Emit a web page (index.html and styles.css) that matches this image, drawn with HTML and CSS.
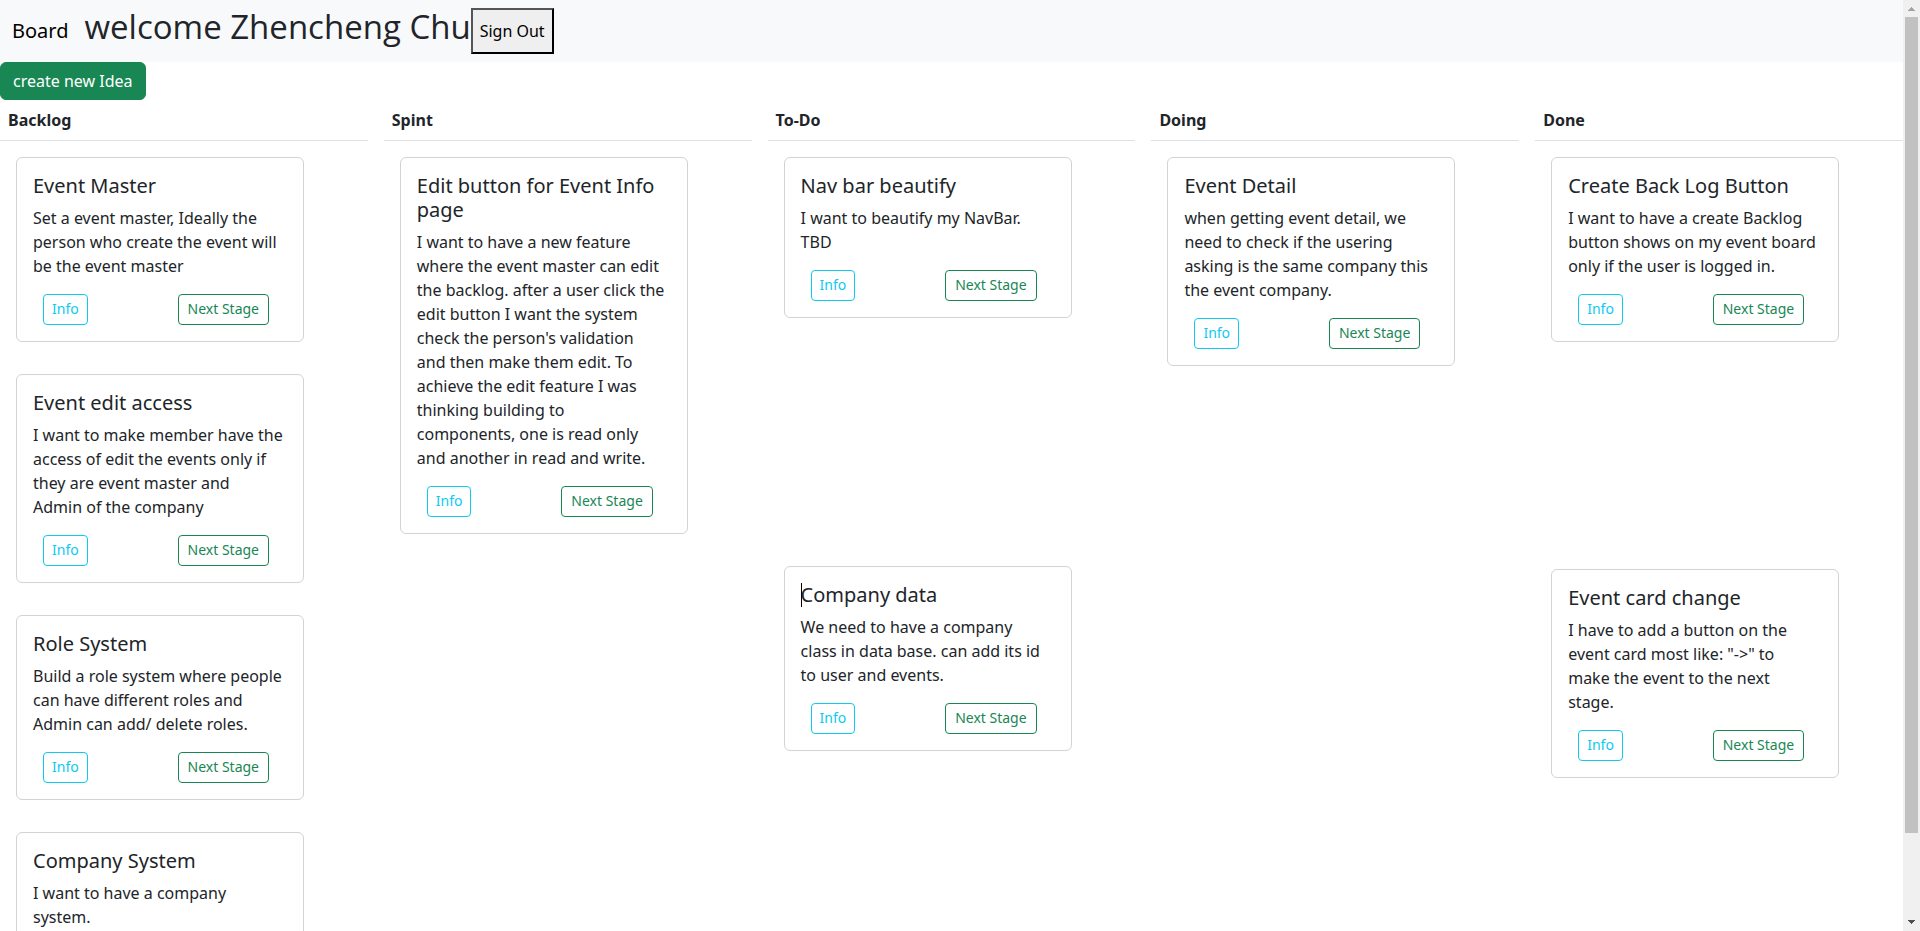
FILE: index.html
```html
<!DOCTYPE html>
<html lang="en">
<head>
<meta charset="utf-8">
<meta name="viewport" content="width=device-width, initial-scale=1">
<title>Board</title>
<link rel="stylesheet" href="styles.css">
</head>
<body>
<div class="page">
  <nav class="navbar">
    <a class="brand" href="#">Board</a>
    <h1 class="welcome">welcome Zhencheng Chu</h1>
    <button class="sign-out" type="button">Sign Out</button>
  </nav>
  <button class="btn-create" type="button">create new Idea</button>
  <main class="board">
    <section class="column">
      <h2 class="column-title">Backlog</h2>
      <div class="cards">
        <article class="card">
          <h3 class="card-title">Event Master</h3>
          <p class="card-text">Set a event master, Ideally the person who create the event will be the event master</p>
          <div class="actions"><button class="btn btn-info" type="button">Info</button><button class="btn btn-next" type="button">Next Stage</button></div>
        </article>
        <article class="card">
          <h3 class="card-title">Event edit access</h3>
          <p class="card-text">I want to make member have the access of edit the events only if they are event master and<br>Admin of the company</p>
          <div class="actions"><button class="btn btn-info" type="button">Info</button><button class="btn btn-next" type="button">Next Stage</button></div>
        </article>
        <article class="card">
          <h3 class="card-title">Role System</h3>
          <p class="card-text">Build a role system where people can have different roles and<br>Admin can add/ delete roles.</p>
          <div class="actions"><button class="btn btn-info" type="button">Info</button><button class="btn btn-next" type="button">Next Stage</button></div>
        </article>
        <article class="card">
          <h3 class="card-title">Company System</h3>
          <p class="card-text">I want to have a company<br>system.</p>
        </article>
      </div>
    </section>
    <section class="column">
      <h2 class="column-title">Spint</h2>
      <div class="cards">
        <article class="card">
          <h3 class="card-title">Edit button for Event Info page</h3>
          <p class="card-text">I want to have a new feature where the event master can edit the backlog. after a user click the edit button I want the system check the person's validation<br>and then make them edit. To achieve the edit feature I was thinking building to<br>components, one is read only<br>and another in read and write.</p>
          <div class="actions"><button class="btn btn-info" type="button">Info</button><button class="btn btn-next" type="button">Next Stage</button></div>
        </article>
      </div>
    </section>
    <section class="column">
      <h2 class="column-title">To-Do</h2>
      <div class="cards cards-todo">
        <article class="card">
          <h3 class="card-title">Nav bar beautify</h3>
          <p class="card-text">I want to beautify my NavBar.<br>TBD</p>
          <div class="actions"><button class="btn btn-info" type="button">Info</button><button class="btn btn-next" type="button">Next Stage</button></div>
        </article>
        <article class="card">
          <h3 class="card-title"><span class="caret"></span>Company data</h3>
          <p class="card-text">We need to have a company<br>class in data base. can add its id to user and events.</p>
          <div class="actions"><button class="btn btn-info" type="button">Info</button><button class="btn btn-next" type="button">Next Stage</button></div>
        </article>
      </div>
    </section>
    <section class="column">
      <h2 class="column-title">Doing</h2>
      <div class="cards">
        <article class="card">
          <h3 class="card-title">Event Detail</h3>
          <p class="card-text">when getting event detail, we need to check if the usering asking is the same company this the event company.</p>
          <div class="actions"><button class="btn btn-info" type="button">Info</button><button class="btn btn-next" type="button">Next Stage</button></div>
        </article>
      </div>
    </section>
    <section class="column">
      <h2 class="column-title">Done</h2>
      <div class="cards cards-done">
        <article class="card">
          <h3 class="card-title">Create Back Log Button</h3>
          <p class="card-text">I want to have a create Backlog button shows on my event board only if the user is logged in.</p>
          <div class="actions"><button class="btn btn-info" type="button">Info</button><button class="btn btn-next" type="button">Next Stage</button></div>
        </article>
        <article class="card">
          <h3 class="card-title">Event card change</h3>
          <p class="card-text">I have to add a button on the<br>event card most like: "-&gt;" to<br>make the event to the next<br>stage.</p>
          <div class="actions"><button class="btn btn-info" type="button">Info</button><button class="btn btn-next" type="button">Next Stage</button></div>
        </article>
      </div>
    </section>
  </main>
</div>
<div class="scrollbar" aria-hidden="true">
  <svg class="arrow" viewBox="0 0 17 17"><path d="M5 11h7v-1h-1v-1h-1v-1h-1v-1h-1v1h-1v1h-1v1h-1z" fill="#a3a3a3"/></svg>
  <div class="track"><div class="thumb"></div></div>
  <svg class="arrow" viewBox="0 0 17 17"><path d="M5 6h7v1h-1v1h-1v1h-1v1h-1v-1h-1v-1h-1v-1h-1z" fill="#505050"/></svg>
</div>
</body>
</html>
```
FILE: styles.css
```css
* {
  box-sizing: border-box;
}

body {
  display: flex;
  height: 100vh;
  margin: 0;
  overflow: hidden;
  background: #fff;
  color: #212529;
  font: 16px/24px "Noto Sans", "Open Sans", sans-serif;
}

button {
  font-family: inherit;
  cursor: pointer;
}

h1, h2, h3, p {
  margin: 0;
}

.page {
  flex: 1;
  min-width: 0;
}

.navbar {
  display: flex;
  align-items: stretch;
  padding: 8px 12px;
  background: #f8f9fb;
}

.brand {
  align-self: center;
  margin-right: 16px;
  color: #000;
  font-size: 20px;
  line-height: 30px;
  text-decoration: none;
}

.welcome {
  font-family: "Open Sans", "Noto Sans", sans-serif;
  font-size: 33px;
  font-weight: 400;
  line-height: 38px;
}

.sign-out {
  padding: 8px 7px;
  border: 2px solid;
  border-color: #555 #000 #000 #555;
  background: #efefef;
  color: #000;
  font-size: 16px;
  line-height: 26px;
}

.btn-create {
  display: block;
  padding: 6px 12px;
  border: 1px solid #198754;
  border-radius: 6px;
  background: #198754;
  color: #fff;
  font-size: 16px;
  line-height: 24px;
}

.board {
  display: grid;
  grid-template-columns: repeat(5, minmax(0, 1fr));
  gap: 16px;
}

.column-title {
  padding: 8px;
  border-bottom: 1px solid #dee2e6;
  font-size: 16px;
  font-weight: 700;
  line-height: 24px;
}

.cards {
  display: flex;
  flex-direction: column;
  gap: 32px;
  padding: 16px;
}

.cards-todo {
  gap: 248px;
}

.cards-done {
  gap: 227px;
}

.card {
  width: 288px;
  padding: 16px;
  border: 1px solid #d3d3d4;
  border-radius: 6px;
}

.card-title {
  position: relative;
  margin-bottom: 8px;
  font-size: 20px;
  font-weight: 400;
  line-height: 24px;
}

.caret {
  position: absolute;
  top: 0;
  left: 0;
  width: 1px;
  height: 24px;
  background: #000;
}

.actions {
  display: flex;
  justify-content: space-between;
  margin-top: 16px;
  padding: 0 18px 0 10px;
}

.btn {
  padding: 3px 8px 5px;
  border: 1px solid;
  border-radius: 4px;
  background: #fff;
  font-size: 14px;
  line-height: 21px;
}

.btn-info {
  border-color: #0dcaf0;
  color: #0dcaf0;
}

.btn-next {
  padding-right: 9px;
  padding-left: 9px;
  border-color: #198754;
  color: #198754;
}

.scrollbar {
  display: flex;
  flex-direction: column;
  width: 17px;
  background: #f0f0f0;
}

.arrow {
  width: 17px;
  height: 17px;
}

.track {
  flex: 1;
  padding: 0 2px;
}

.thumb {
  height: 91%;
  background: #c1c1c1;
}
```
